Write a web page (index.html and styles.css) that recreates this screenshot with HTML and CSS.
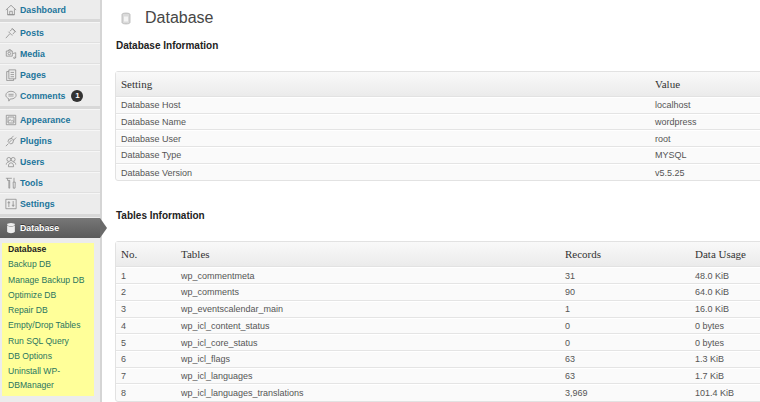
FILE: index.html
```html
<!DOCTYPE html>
<html lang="en">

<head>
   <meta charset="UTF-8">
   <meta name="viewport" content="width=device-width, initial-scale=1.0">
   <title>Database</title>
   <link rel="stylesheet" href="styles.css">
</head>

<body>
   <aside class="sidebar">
      <ul class="menu menu-first">
         <li class="menu-item">
            <svg class="icon" viewBox="0 0 14 14"><path d="M1 7 7 1.500l6 5.500M3 6v6.500h8V6M3 12.500h8M5.500 12.500V8.500h3v4"/></svg>
            <a href="#">Dashboard</a>
         </li>
      </ul>
      <ul class="menu">
         <li class="menu-item">
            <svg class="icon" viewBox="0 0 14 14"><path d="M1 13 5.500 8M4 5.500 8.500 10M5.500 5 9 2l3 3-3 3.500M8 1.500l4.500 4.500"/></svg>
            <a href="#">Posts</a>
         </li>
         <li class="menu-item">
            <svg class="icon" viewBox="0 0 14 14"><path d="M1.500 3.500h7v6h-7zM3.500 3.500 4.500 2h2l1 1.500M9 6.500l3.500-1v6l-1.500.8-1.200-.8 1.200-.8 1.500.3"/><circle cx="5" cy="6.500" r="1.500"/></svg>
            <a href="#">Media</a>
         </li>
         <li class="menu-item">
            <svg class="icon" viewBox="0 0 14 14"><path d="M4.500 1h8v10.500h-8zM4.500 3H2v10.500h8v-2M6.500 4h4M6.500 6.500h4M6.500 9h4"/></svg>
            <a href="#">Pages</a>
         </li>
         <li class="menu-item">
            <svg class="icon" viewBox="0 0 14 14"><path d="M7 1.500c3.300 0 6 1.900 6 4.500S10.300 10.500 7 10.500H6L4.500 13l-.3-3C2.300 9.300 1 7.800 1 6c0-2.600 2.700-4.500 6-4.500zM4 5h6M4 7h6"/></svg>
            <a href="#">Comments</a>
            <span class="badge">1</span>
         </li>
      </ul>
      <ul class="menu">
         <li class="menu-item">
            <svg class="icon" viewBox="0 0 14 14"><path d="M1.500 1.500h11v11h-11zM3.500 3.500h7v7h-7zM3.500 9l2.500-2.500 2 2 1-1 1.500 1.500"/></svg>
            <a href="#">Appearance</a>
         </li>
         <li class="menu-item">
            <svg class="icon" viewBox="0 0 14 14"><path d="M1 13l3-3M3.500 7.500 6.500 10.500 9 9.500 10 6 8 4 4.500 5zM6.500 4.500 10 1M9.500 6.500 13 3M5 8.500l3-3"/></svg>
            <a href="#">Plugins</a>
         </li>
         <li class="menu-item">
            <svg class="icon" viewBox="0 0 14 14"><circle cx="4.500" cy="4" r="2.300"/><circle cx="9.500" cy="4" r="2.300"/><path d="M1.500 10c0-2 1.300-3 3-3M12.500 10c0-2-1.300-3-3-3M4 12.500C4 9.500 5 8 7 8s3 1.500 3 4.500z"/></svg>
            <a href="#">Users</a>
         </li>
         <li class="menu-item">
            <svg class="icon" viewBox="0 0 14 14"><path d="M1 1.500h7M3 1.500v2.500h2.500V13h-1V4M10.500 1v5M9.500 6h2.500l-.3 7h-2z"/></svg>
            <a href="#">Tools</a>
         </li>
         <li class="menu-item">
            <svg class="icon" viewBox="0 0 14 14"><path d="M1 1.500h12v11H1zM4.500 3.500v7M9.500 3.500v7M3 5.500h3M8 8.500h3"/></svg>
            <a href="#">Settings</a>
         </li>
      </ul>
      <div class="current-item">
         <svg class="icon" viewBox="0 0 14 14"><ellipse class="db-top" cx="7" cy="3" rx="4.500" ry="1.800"/><path class="db-body" d="M2.500 4v7.500C3.500 13.500 10.500 13.500 11.500 11.500V4C10 5.800 4 5.800 2.500 4z"/></svg>
         <a href="#">Database</a>
      </div>
      <ul class="submenu">
         <li class="active"><a href="#">Database</a></li>
         <li><a href="#">Backup DB</a></li>
         <li><a href="#">Manage Backup DB</a></li>
         <li><a href="#">Optimize DB</a></li>
         <li><a href="#">Repair DB</a></li>
         <li><a href="#">Empty/Drop Tables</a></li>
         <li><a href="#">Run SQL Query</a></li>
         <li><a href="#">DB Options</a></li>
         <li><a href="#">Uninstall WP-DBManager</a></li>
      </ul>
   </aside>

   <main class="content">
      <header class="page-title">
         <svg class="title-icon" viewBox="0 0 10 13"><path d="M1 2.500C1 .6 9 .6 9 2.500v8C9 12.400 1 12.400 1 10.500z"/><rect x="3" y="4.500" width="4" height="5"/></svg>
         <h1>Database</h1>
      </header>

      <h3 class="section-title">Database Information</h3>
      <table class="data-table info-table">
         <thead>
            <tr><th class="col-setting">Setting</th><th>Value</th></tr>
         </thead>
         <tbody>
            <tr><td>Database Host</td><td>localhost</td></tr>
            <tr><td>Database Name</td><td>wordpress</td></tr>
            <tr><td>Database User</td><td>root</td></tr>
            <tr><td>Database Type</td><td>MYSQL</td></tr>
            <tr><td>Database Version</td><td>v5.5.25</td></tr>
         </tbody>
      </table>

      <h3 class="section-title tables-title">Tables Information</h3>
      <table class="data-table">
         <thead>
            <tr>
               <th class="col-no">No.</th>
               <th class="col-table">Tables</th>
               <th class="col-records">Records</th>
               <th>Data Usage</th>
            </tr>
         </thead>
         <tbody>
            <tr><td>1</td><td>wp_commentmeta</td><td>31</td><td>48.0 KiB</td></tr>
            <tr><td>2</td><td>wp_comments</td><td>90</td><td>64.0 KiB</td></tr>
            <tr><td>3</td><td>wp_eventscalendar_main</td><td>1</td><td>16.0 KiB</td></tr>
            <tr><td>4</td><td>wp_icl_content_status</td><td>0</td><td>0 bytes</td></tr>
            <tr><td>5</td><td>wp_icl_core_status</td><td>0</td><td>0 bytes</td></tr>
            <tr><td>6</td><td>wp_icl_flags</td><td>63</td><td>1.3 KiB</td></tr>
            <tr><td>7</td><td>wp_icl_languages</td><td>63</td><td>1.7 KiB</td></tr>
            <tr><td>8</td><td>wp_icl_languages_translations</td><td>3,969</td><td>101.4 KiB</td></tr>
         </tbody>
      </table>
   </main>
</body>

</html>
```

FILE: styles.css
```css
* {
   margin: 0;
   padding: 0;
   box-sizing: border-box;
}

html,
body {
   height: 402px;
   overflow: hidden;
}

body {
   display: flex;
   background: #fff;
   font-family: 'Liberation Sans', Arial, sans-serif;
   font-size: 9px;
   color: #555;
}

/* left menu */
.sidebar {
   flex: 0 0 102px;
   height: 402px;
   background: #ececec;
   border-right: 2px solid #d5d5d5;
}

.menu {
   list-style: none;
   border-bottom: 3px solid #d8d8d8;
}

.menu-item {
   display: flex;
   align-items: center;
   height: 21px;
   padding-left: 5px;
   border-bottom: 1px solid #e0e0e0;
   border-top: 1px solid #f6f6f6;
}

.menu-item:last-child {
   border-bottom: none;
}

.menu-first .menu-item {
   height: 19px;
   border-top: none;
}

.menu-item a {
   margin-left: 3px;
   color: #21759b;
   font-size: 8.8px;
   font-weight: bold;
   text-decoration: none;
}

.icon {
   flex: none;
   width: 12px;
   height: 12px;
   fill: none;
   stroke: #8a8a8a;
   stroke-width: 0.9;
}

.badge {
   width: 12px;
   height: 12px;
   margin-left: 6px;
   border-radius: 50%;
   background: #333;
   color: #fff;
   font-size: 8px;
   font-weight: bold;
   line-height: 12px;
   text-align: center;
}

.current-item {
   position: relative;
   display: flex;
   align-items: center;
   width: 100px;
   height: 20px;
   margin-top: 1px;
   padding-left: 5px;
   background: linear-gradient(to bottom, #777, #5a5a5a);
}

/* little arrow sticking out of the bar */
.current-item::after {
   content: '';
   position: absolute;
   top: 0;
   left: 100px;
   border-top: 10px solid transparent;
   border-bottom: 10px solid transparent;
   border-left: 7px solid #6a6a6a;
}

.current-item a {
   margin-left: 3px;
   color: #fff;
   font-size: 8.8px;
   font-weight: bold;
   text-decoration: none;
   text-shadow: 0 -1px 0 rgba(0, 0, 0, 0.5);
}

.db-top,
.db-body {
   fill: #eee;
   stroke: none;
}

.submenu {
   list-style: none;
   width: 92px;
   margin: 5px 0 0 2px;
   padding: 0 4px 2px 6px;
   background: #ffff99;
}

.submenu li {
   padding: 0 0 2px;
}

.submenu a {
   display: block;
   color: #2a7560;
   font-size: 8.6px;
   line-height: 13.3px;
   text-decoration: none;
}

.submenu .active a {
   color: #222;
   font-weight: bold;
}

/* main area */
.content {
   flex: 1;
   min-width: 0;
   padding: 0 0 0 13px;
}

.page-title {
   display: flex;
   align-items: center;
   height: 36px;
   padding-left: 6px;
}

.title-icon {
   width: 10px;
   height: 13px;
   fill: #dadada;
   stroke: #aaa;
   stroke-width: 0.7;
}

.title-icon rect {
   fill: #f4f4f4;
   stroke: none;
}

.page-title h1 {
   margin-left: 14px;
   color: #464646;
   font-size: 16px;
   font-weight: normal;
}

.section-title {
   margin: 4px 0 0 1px;
   height: 31px;
   color: #222;
   font-size: 10px;
   font-weight: bold;
   line-height: 12px;
}

.tables-title {
   margin-top: 29px;
}

.data-table {
   width: 665px;
   border: 1px solid #e2e2e2;
   border-radius: 3px;
   border-spacing: 0;
   table-layout: fixed;
   background: #fafafa;
}

.data-table th {
   height: 25px;
   padding-left: 5px;
   background: linear-gradient(to bottom, #f9f9f9, #ebebeb);
   border-bottom: 1px solid #e2e2e2;
   color: #333;
   font-family: 'Liberation Serif', 'Times New Roman', serif;
   font-size: 11px;
   font-weight: normal;
   text-align: left;
}

.data-table td {
   height: 16.7px;
   padding-left: 5px;
   border-top: 1px solid #fff;
   border-bottom: 1px solid #e4e4e4;
   color: #555;
   font-size: 9px;
   white-space: nowrap;
}

.data-table tr:last-child td {
   border-bottom: none;
}

.col-setting {
   width: 534px;
}

.col-no {
   width: 60px;
}

.col-table {
   width: 384px;
}

.col-records {
   width: 130px;
}
```
